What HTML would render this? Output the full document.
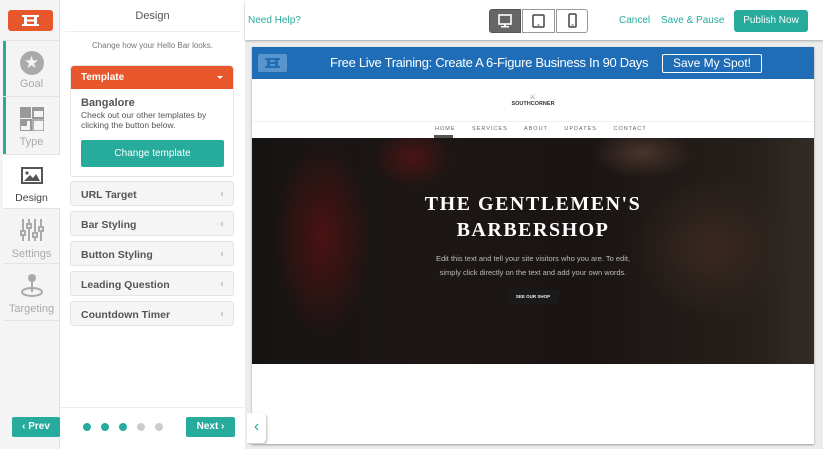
<!DOCTYPE html>
<html><head><meta charset="utf-8"><style>
*{box-sizing:border-box;margin:0;padding:0}
body{width:823px;height:449px;overflow:hidden;background:#ececec;font-family:"Liberation Sans",sans-serif;position:relative}
.abs{position:absolute}
.nav{left:0;top:0;width:60px;height:449px;background:#f4f4f4;border-right:1px solid #e2e2e2}
.tile{position:absolute;left:3px;width:57px;border-bottom:1px solid #e4e4e4;text-align:center;color:#aaa;font-size:11px}
.side{left:60px;top:0;width:185px;height:449px;background:#fff}
.acc{position:absolute;left:70px;width:164px;height:25px;background:#f5f5f5;border:1px solid #e4e4e4;border-radius:3px;font-size:10.5px;font-weight:bold;color:#555;padding:7px 0 0 10px}
.acc:after{content:"";position:absolute;right:10px;top:9px;border:3px solid transparent;border-right:3px solid #ccc}
.btn{position:absolute;background:#26ab9c;color:#fff;font-size:10px;font-weight:bold;border-radius:2px;text-align:center}
.dot{position:absolute;top:423px;width:8px;height:8px;border-radius:50%}
</style></head><body>
<div class="abs nav">
 <div class="abs" style="left:8px;top:10px;width:45px;height:21px;background:#e8562b;border-radius:3px">
  <svg width="45" height="21" viewBox="0 0 45 21"><g fill="#fff"><rect x="14" y="5" width="17" height="2"/><rect x="14" y="14" width="17" height="2"/><rect x="16" y="5" width="3" height="11"/><rect x="26" y="5" width="3" height="11"/><rect x="16" y="9.5" width="13" height="2"/></g></svg>
 </div>
 <div class="abs" style="left:3px;top:40px;width:3px;height:169px;background:#26ab9c"></div>
 <div class="tile" style="top:40px;height:57px;border-top:1px solid #e4e4e4">
  <div style="margin:10px auto 0;width:24px;height:24px;border-radius:50%;background:#aaa;color:#f4f4f4;font-size:17px;line-height:24px">★</div><div style="margin-top:3px">Goal</div></div>
 <div class="tile" style="top:97px;height:58px">
  <svg style="margin-top:10px" width="24" height="24" viewBox="0 0 24 24"><g fill="#999"><rect x="0" y="0" width="11" height="11"/><rect x="13" y="0" width="11" height="11" fill="none" stroke="#999" stroke-width="2"/><rect x="0" y="13" width="11" height="11" fill="none" stroke="#999" stroke-width="2"/><rect x="0" y="13" width="7" height="6"/><rect x="13" y="13" width="11" height="11" fill="none" stroke="#999" stroke-width="1.5"/><rect x="13" y="0" width="11" height="4"/></g></svg>
  <div style="margin-top:2px">Type</div></div>
 <div class="tile" style="top:155px;height:54px;background:#fff;color:#444">
  <svg style="margin-top:12px" width="22" height="17" viewBox="0 0 22 17"><rect x="1" y="1" width="20" height="15" fill="none" stroke="#555" stroke-width="2"/><circle cx="6" cy="6" r="1.6" fill="#555"/><path d="M3 14 L9 8 L12 11 L15 7 L19 14Z" fill="#555"/></svg>
  <div style="margin-top:5px;font-size:10.5px">Design</div></div>
 <div class="tile" style="top:209px;height:55px">
  <svg style="margin-top:10px" width="24" height="22" viewBox="0 0 24 22"><g stroke="#aaa" stroke-width="2" fill="#f4f4f4"><line x1="3" y1="0" x2="3" y2="22"/><line x1="9" y1="0" x2="9" y2="22"/><line x1="15" y1="0" x2="15" y2="22"/><line x1="21" y1="0" x2="21" y2="22"/><rect x="1" y="12" width="4" height="4"/><rect x="7" y="5" width="4" height="4"/><rect x="13" y="14" width="4" height="4"/><rect x="19" y="8" width="4" height="4"/></g></svg>
  <div style="margin-top:4px">Settings</div></div>
 <div class="tile" style="top:264px;height:57px">
  <svg style="margin-top:9px" width="24" height="24" viewBox="0 0 24 24"><circle cx="12" cy="5" r="4" fill="#aaa"/><line x1="12" y1="8" x2="12" y2="19" stroke="#aaa" stroke-width="2"/><ellipse cx="12" cy="19" rx="10" ry="4" fill="none" stroke="#aaa" stroke-width="2"/></svg>
  <div style="margin-top:3px">Targeting</div></div>
</div>
<div class="abs side">
 <div class="abs" style="left:0;top:10px;width:185px;text-align:center;font-size:11px;color:#555">Design</div>
 <div class="abs" style="left:5px;top:31px;width:175px;height:1px;background:#eee"></div>
 <div class="abs" style="left:0;top:41px;width:185px;text-align:center;font-size:8px;color:#777">Change how your Hello Bar looks.</div>
 <div class="abs" style="left:0;top:407px;width:185px;height:1px;background:#eee"></div>
</div>
<div class="abs" style="left:70px;top:65px;width:164px;height:112px;border:1px solid #e4e4e4;border-radius:3px;background:#fff">
 <div style="height:23px;background:#e8562b;border-radius:3px 3px 0 0;color:#fff;font-size:10px;font-weight:bold;padding:6px 0 0 10px;position:relative">Template<span style="position:absolute;right:10px;top:10px;border:3px solid transparent;border-top:3px solid #fff"></span></div>
 <div style="padding:8px 0 0 10px;font-size:11px;font-weight:bold;color:#555">Bangalore</div>
 <div style="padding:1px 0 0 10px;font-size:8.5px;color:#555;line-height:10px">Check out our other templates by<br>clicking the button below.</div>
 <div class="btn" style="left:10px;top:74px;width:143px;height:27px;line-height:27px;font-weight:normal;font-size:10px">Change template</div>
</div>
<div class="acc" style="top:181px">URL Target</div>
<div class="acc" style="top:211px">Bar Styling</div>
<div class="acc" style="top:241px">Button Styling</div>
<div class="acc" style="top:271px">Leading Question</div>
<div class="acc" style="top:301px">Countdown Timer</div>
<div class="btn" style="left:12px;top:417px;width:48px;height:20px;line-height:20px">&#8249; Prev</div>
<div class="dot" style="left:83px;background:#26ab9c"></div>
<div class="dot" style="left:101px;background:#26ab9c"></div>
<div class="dot" style="left:119px;background:#26ab9c"></div>
<div class="dot" style="left:137px;background:#ccc"></div>
<div class="dot" style="left:155px;background:#ccc"></div>
<div class="btn" style="left:186px;top:417px;width:49px;height:20px;line-height:20px">Next &#8250;</div>
<div class="abs" style="left:245px;top:0;width:578px;height:40px;background:#fff;box-shadow:0 1px 2px #aaa"></div>
<div class="abs" style="left:248px;top:15px;font-size:10px;color:#26ab9c">Need Help?</div>
<div class="abs" style="left:489px;top:9px;width:32px;height:24px;background:#666;border:1px solid #555;border-radius:3px 0 0 3px">
 <svg width="30" height="22" viewBox="0 0 30 22"><rect x="9" y="5" width="12" height="9" fill="none" stroke="#fff" stroke-width="1.6"/><rect x="14" y="14" width="2" height="2" fill="#fff"/><rect x="11" y="16" width="8" height="1.5" fill="#fff"/></svg></div>
<div class="abs" style="left:522px;top:9px;width:33px;height:24px;border:1px solid #999;background:#fff">
 <svg width="31" height="22" viewBox="0 0 31 22"><rect x="10" y="5" width="11" height="12" rx="1" fill="none" stroke="#444" stroke-width="1.5"/><rect x="14.5" y="14.5" width="2" height="1" fill="#444"/></svg></div>
<div class="abs" style="left:556px;top:9px;width:32px;height:24px;border:1px solid #999;background:#fff;border-radius:0 3px 3px 0">
 <svg width="30" height="22" viewBox="0 0 30 22"><rect x="12" y="4" width="7" height="13" rx="1" fill="none" stroke="#444" stroke-width="1.5"/><rect x="14.5" y="14.5" width="2" height="1" fill="#444"/></svg></div>
<div class="abs" style="left:619px;top:15px;font-size:10px;color:#26ab9c">Cancel</div>
<div class="abs" style="left:661px;top:15px;font-size:10px;color:#26ab9c">Save &amp; Pause</div>
<div class="btn" style="left:734px;top:10px;width:74px;height:22px;line-height:22px;font-weight:normal;border-radius:3px">Publish Now</div>
<div class="abs" style="left:252px;top:47px;width:562px;height:397px;background:#fff;box-shadow:0 1px 2px #999"></div>
<div class="abs" style="left:252px;top:47px;width:562px;height:32px;background:#1e6db6">
 <div class="abs" style="left:6px;top:7px;width:29px;height:18px;background:#5a94cc;border-radius:2px"><svg width="29" height="18" viewBox="0 0 29 18"><g fill="#1e6db6"><rect x="7" y="4" width="15" height="2"/><rect x="7" y="12" width="15" height="2"/><rect x="9" y="4" width="3" height="10"/><rect x="17" y="4" width="3" height="10"/><rect x="9" y="8" width="11" height="2"/></g></svg></div>
 <div class="abs" style="left:78px;top:8px;width:324px;font-size:13px;letter-spacing:-0.3px;color:#fff;white-space:nowrap">Free Live Training: Create A 6-Figure Business In 90 Days</div>
 <div class="abs" style="left:410px;top:7px;width:100px;height:19px;border:1px solid #fff;border-radius:2px;color:#fff;font-size:12px;text-align:center;line-height:17px">Save My Spot!</div>
</div>
<div class="abs" style="left:252px;top:93px;width:562px;text-align:center;font-size:7px;color:#888;letter-spacing:1px">⚔</div>
<div class="abs" style="left:252px;top:101px;width:562px;text-align:center;font-size:5.5px;font-weight:bold;color:#333">SOUTHCORNER</div>
<div class="abs" style="left:252px;top:121px;width:562px;height:1px;background:#f0f0f0"></div>
<div class="abs" style="left:435px;top:126px;font-size:5.5px;color:#666;letter-spacing:1px;word-spacing:14px">HOME SERVICES ABOUT UPDATES CONTACT</div>
<div class="abs" style="left:434px;top:135px;width:19px;height:3px;background:#555"></div>
<div class="abs" style="left:252px;top:138px;width:562px;height:226px;background:
 radial-gradient(ellipse 50px 25px at 390px 15px,#4a342c,transparent),
 radial-gradient(ellipse 80px 70px at 460px 110px,#3a2820,transparent),
 radial-gradient(ellipse 50px 100px at 70px 100px,#4a1212,transparent),
 radial-gradient(ellipse 40px 30px at 160px 20px,#4a1414,transparent),
 linear-gradient(90deg,#161413,#1c1615 30%,#1a1513 60%,#26201c 90%,#332c26)"></div>
<div class="abs" style="left:252px;top:191px;width:562px;text-align:center;font-family:'Liberation Serif',serif;font-weight:bold;font-size:20px;line-height:26px;color:#fff;letter-spacing:1.5px">THE GENTLEMEN'S<br>BARBERSHOP</div>
<div class="abs" style="left:252px;top:252px;width:562px;text-align:center;font-size:7.5px;line-height:14px;color:#bbb">Edit this text and tell your site visitors who you are. To edit,<br>simply click directly on the text and add your own words.</div>
<div class="abs" style="left:507px;top:290px;width:52px;height:14px;background:#1a1a1a;color:#eee;font-size:4.5px;font-weight:bold;text-align:center;line-height:14px">SEE OUR SHOP</div>
<div class="abs" style="left:247px;top:413px;width:19px;height:30px;background:#fff;border-radius:0 4px 4px 0;box-shadow:1px 1px 2px #bbb;color:#26ab9c;font-size:16px;text-align:center;line-height:28px">&#8249;</div>
</body></html>
